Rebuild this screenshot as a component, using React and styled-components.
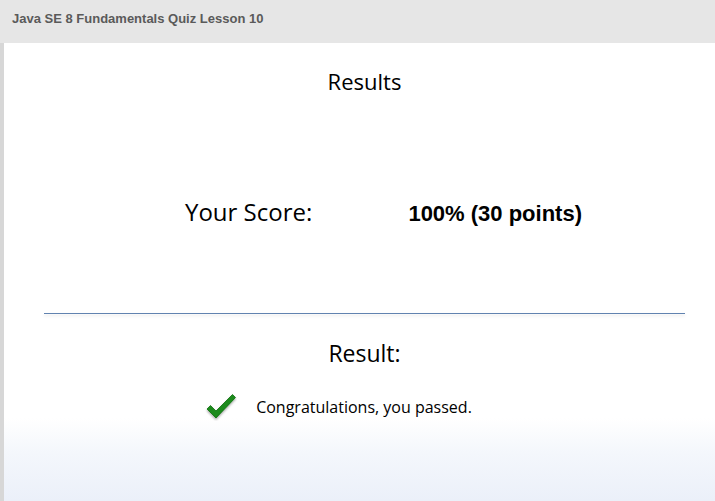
import React from "react";
import styled, { createGlobalStyle } from "styled-components";

const GlobalStyle = createGlobalStyle`
  html, body {
    margin: 0;
    padding: 0;
    width: 715px;
    height: 501px;
    overflow: hidden;
    background: #d9d9d9;
  }
`;

const Page = styled.div`
  width: 715px;
  height: 501px;
  display: flex;
  flex-direction: column;
  background: #e6e6e6;
`;

const Header = styled.div`
  height: 43px;
  box-sizing: border-box;
  padding: 11px 0 0 12px;
  font-family: "Liberation Sans", Arial, sans-serif;
  font-weight: bold;
  font-size: 13px;
  color: #5a5a5a;
`;

const Body = styled.div`
  flex: 1;
  display: flex;
`;

const Gutter = styled.div`
  width: 4px;
  background: #d7d7d7;
`;

const Panel = styled.div`
  flex: 1;
  display: flex;
  flex-direction: column;
  align-items: center;
  padding-left: 10px;
  background: linear-gradient(
    to bottom,
    #ffffff 0px,
    #ffffff 375px,
    #f4f7fc 410px,
    #ebf0f9 458px
  );
  font-family: "Open Sans", "Noto Sans", sans-serif;
  color: #000;
`;

const Title = styled.div`
  margin-top: ${(p) => p.$top}px;
  font-size: ${(p) => p.$size}px;
  line-height: 30px;
`;

const ScoreRow = styled.div`
  margin-top: 101px;
  display: flex;
  align-items: baseline;
  width: 397px;
  margin-left: 38px;
`;

const ScoreLabel = styled.div`
  width: 225px;
  font-size: 24px;
  line-height: 30px;
`;

const ScoreValue = styled.div`
  font-family: "Liberation Sans", Arial, sans-serif;
  font-weight: bold;
  font-size: 22px;
  white-space: nowrap;
`;

const Divider = styled.div`
  align-self: stretch;
  margin: 86px 30px 0 30px;
  height: 1px;
  background: #6183b0;
  box-shadow: 0 2px 3px rgba(0, 0, 0, 0.12);
`;

const PassRow = styled.div`
  margin-top: 25px;
  display: flex;
  align-items: center;
  gap: 19px;
  margin-left: -52px;
`;

const PassText = styled.div`
  font-size: 16px;
`;

const Check = () => (
  <svg width="32" height="28" viewBox="0 0 32 28">
    <defs>
      <filter id="sh" x="-20%" y="-20%" width="140%" height="150%">
        <feDropShadow dx="0" dy="1.5" stdDeviation="1" floodColor="#000" floodOpacity="0.35" />
      </filter>
    </defs>
    <path
      d="M2 16 L5.5 12.5 L11 18 L27.5 1.5 L30.5 4.5 L11 25 Z"
      fill="#1a8a1a"
      stroke="#0e6e0e"
      strokeWidth="0.8"
      strokeLinejoin="round"
      filter="url(#sh)"
    />
  </svg>
);

const App = () => {
  return (
    <>
      <GlobalStyle />
      <Page>
        <Header>Java SE 8 Fundamentals Quiz Lesson 10</Header>
        <Body>
          <Gutter />
          <Panel>
            <Title $top={23} $size={22}>Results</Title>
            <ScoreRow>
              <ScoreLabel>Your Score:</ScoreLabel>
              <ScoreValue>100% (30 points)</ScoreValue>
            </ScoreRow>
            <Divider />
            <Title $top={24} $size={23}>Result:</Title>
            <PassRow>
              <Check />
              <PassText>Congratulations, you passed.</PassText>
            </PassRow>
          </Panel>
        </Body>
      </Page>
    </>
  );
};

export default App;
